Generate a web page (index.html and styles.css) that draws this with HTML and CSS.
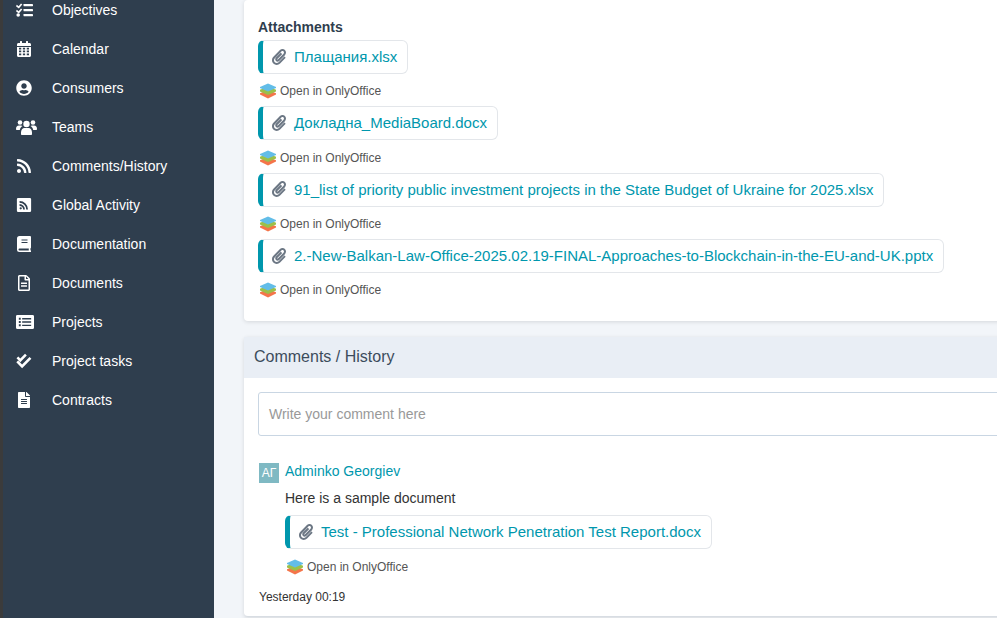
FILE: index.html
```html
<!DOCTYPE html>
<html lang="en">
<head>
  <meta charset="UTF-8" />
  <meta name="viewport" content="width=device-width, initial-scale=1.0" />
  <title>Comments / History</title>
  <link rel="stylesheet" href="styles.css">
</head>
<body>
  <svg class="defs" width="0" height="0" aria-hidden="true">
    <symbol id="clip" viewBox="0 0 448 512"><path d="M43.246 466.142c-58.43-60.289-57.341-157.511 1.386-217.581L254.392 34c44.316-45.332 116.351-45.336 160.671 0 43.89 44.894 43.943 117.329 0 162.276L232.214 383.128c-29.855 30.537-78.633 30.111-107.982-.998-28.275-29.97-27.368-77.473 1.452-106.953l143.743-146.835c6.182-6.314 16.312-6.422 22.626-.241l22.861 22.379c6.315 6.182 6.422 16.312.241 22.626L171.427 319.927c-4.932 5.045-5.236 13.428-.648 18.292 4.372 4.634 11.245 4.711 15.688.165l182.849-186.851c19.613-20.062 19.613-52.725-.011-72.798-19.189-19.627-49.957-19.637-69.154 0L90.39 293.295c-34.763 35.56-35.299 93.12-1.191 128.313 34.01 35.093 88.985 35.137 123.058.286l172.06-175.999c6.177-6.319 16.307-6.433 22.626-.256l22.877 22.364c6.319 6.177 6.434 16.307.256 22.626l-172.06 175.998c-59.576 60.938-155.943 60.216-214.77-.485z"/></symbol>
    <symbol id="office" viewBox="0 0 20 18">
      <path fill="#f4754a" d="M1 11.500 10 8l9 3.500v1.500L10 17.500 1 13z"/>
      <path fill="#9cc04a" d="M1 7.500 10 4l9 3.500V9.500L10 13.500 1 9.500z"/>
      <path fill="#62bde8" d="M1 4.500 10 .5l9 4v1L10 9.500 1 5.500z"/>
    </symbol>
  </svg>

  <div class="layout">
    <nav class="sidebar">
      <a class="nav-item" href="#">
        <svg class="nav-icon nav-icon-tasks" viewBox="0 0 17 14"><path d="M.8 1.800 2.600 3.300 5 .5 6.300 1.600 2.800 5.600 0 3.200zM.8 6.800 2.600 8.300 5 5.500l1.300 1.100-3.500 4L0 8.200z"/><circle cx="2.200" cy="12" r="1.800"/><rect x="7.500" y="1" width="9.500" height="2.200" rx=".4"/><rect x="7.500" y="6" width="9.500" height="2.200" rx=".4"/><rect x="7.500" y="11" width="9.500" height="2.200" rx=".4"/></svg>
        Objectives
      </a>
      <a class="nav-item" href="#">
        <svg class="nav-icon" viewBox="0 0 448 512"><path fill-rule="evenodd" d="M0 464c0 26.500 21.500 48 48 48h352c26.500 0 48-21.500 48-48V192H0zm64-248h72v56H64zm0 90h72v56H64zm0 90h72v56H64zm124-180h72v56h-72zm0 90h72v56h-72zm0 90h72v56h-72zm124-180h72v56h-72zm0 90h72v56h-72zm0 90h72v56h-72zM400 64h-48V16c0-8.800-7.200-16-16-16h-32c-8.800 0-16 7.200-16 16v48H160V16c0-8.800-7.200-16-16-16h-32c-8.800 0-16 7.200-16 16v48H48C21.500 64 0 85.500 0 112v48h448v-48c0-26.500-21.500-48-48-48z"/></svg>
        Calendar
      </a>
      <a class="nav-item" href="#">
        <svg class="nav-icon" viewBox="0 0 496 512"><path d="M248 8C111 8 0 119 0 256s111 248 248 248 248-111 248-248S385 8 248 8zm0 96c48.600 0 88 39.400 88 88s-39.400 88-88 88-88-39.400-88-88 39.400-88 88-88zm0 344c-58.700 0-111.300-26.600-146.500-68.200 18.800-35.400 55.600-59.800 98.500-59.800 2.400 0 4.800.4 7.100 1.100 13 4.200 26.600 6.900 40.900 6.900 14.300 0 28-2.700 40.900-6.900 2.300-.7 4.700-1.100 7.100-1.100 42.900 0 79.700 24.400 98.500 59.800C359.300 421.400 306.700 448 248 448z"/></svg>
        Consumers
      </a>
      <a class="nav-item" href="#">
        <svg class="nav-icon nav-icon-teams" viewBox="0 0 21 16"><circle cx="4" cy="3.500" r="2.300"/><circle cx="17" cy="3.500" r="2.300"/><circle cx="10.500" cy="5" r="3.200"/><path d="M0 10c0-2 1-3.500 3-3.500h2c.6 0 1.100.2 1.500.5C5 8 4 9.200 3.800 11H1c-.6 0-1-.4-1-1zM21 10c0-2-1-3.500-3-3.500h-2c-.6 0-1.100.2-1.500.5 1.500 1 2.500 2.200 2.700 4H20c.6 0 1-.4 1-1zM5 13.500c0-2.500 1.500-4.500 3.500-4.500h4c2 0 3.500 2 3.500 4.500V15c0 .6-.4 1-1 1H6c-.6 0-1-.4-1-1z"/></svg>
        Teams
      </a>
      <a class="nav-item" href="#">
        <svg class="nav-icon" viewBox="0 0 448 512"><path d="M128.081 415.959c0 35.369-28.672 64.041-64.041 64.041S0 451.328 0 415.959s28.672-64.041 64.041-64.041 64.040 28.673 64.040 64.041zm175.660 47.250c-8.354-154.600-132.185-278.587-286.950-286.950C7.656 175.765 0 183.105 0 192.253v48.069c0 8.415 6.490 15.472 14.887 16.018 111.832 7.284 201.473 96.702 208.772 208.772.547 8.397 7.604 14.887 16.018 14.887h48.069c9.149.001 16.489-7.655 15.995-16.790zm144.249.288C439.596 229.677 251.465 40.445 16.503 32.010 7.473 31.686 0 38.981 0 48.016v48.068c0 8.625 6.835 15.645 15.453 15.999 191.179 7.839 344.627 161.316 352.465 352.465.353 8.618 7.373 15.453 15.999 15.453h48.068c9.034-.001 16.329-7.474 16.005-16.504z"/></svg>
        Comments/History
      </a>
      <a class="nav-item" href="#">
        <svg class="nav-icon" viewBox="-1 -1 18 18"><path fill-rule="evenodd" d="M1.500 0h13A1.500 1.500 0 0 1 16 1.500v13a1.500 1.500 0 0 1-1.500 1.500h-13A1.500 1.500 0 0 1 0 14.500v-13A1.500 1.500 0 0 1 1.500 0zM3 3.500v2A7.500 7.500 0 0 1 10.500 13h2A9.500 9.500 0 0 0 3 3.500zm0 3.500v2A4 4 0 0 1 7 13h2A6 6 0 0 0 3 7zM4.300 10.400a1.300 1.300 0 1 0 0 2.600 1.300 1.300 0 0 0 0-2.600z"/></svg>
        Global Activity
      </a>
      <a class="nav-item" href="#">
        <svg class="nav-icon" viewBox="0 0 14 16"><path fill-rule="evenodd" d="M2.500 0H13a1 1 0 0 1 1 1v10.500a1 1 0 0 1-.5.800c-.1.500-.1 1.400 0 1.900.3.200.5.500.5.800v.5a.5.500 0 0 1-.5.500H2.500A2.500 2.500 0 0 1 0 13.500v-11A2.500 2.500 0 0 1 2.500 0zM4.500 3.500v1h6v-1zm0 2.500v1h6V6zM2.500 12.500a1 1 0 0 0 0 2h9.300a9 9 0 0 1 0-2z"/></svg>
        Documentation
      </a>
      <a class="nav-item" href="#">
        <svg class="nav-icon" viewBox="0 0 384 512"><path d="M369.900 97.900 286 14C277 5 264.800-.1 252.100-.1H48C21.500 0 0 21.500 0 48v416c0 26.500 21.500 48 48 48h288c26.500 0 48-21.500 48-48V131.900c0-12.700-5.100-25-14.100-34zM332.100 128H256V51.900zM48 464V48h160v104c0 13.300 10.700 24 24 24h104v288zm240-212v24c0 6.600-5.400 12-12 12H108c-6.600 0-12-5.400-12-12v-24c0-6.600 5.400-12 12-12h168c6.600 0 12 5.400 12 12zm0 88v24c0 6.600-5.400 12-12 12H108c-6.600 0-12-5.400-12-12v-24c0-6.600 5.400-12 12-12h168c6.600 0 12 5.400 12 12z"/></svg>
        Documents
      </a>
      <a class="nav-item" href="#">
        <svg class="nav-icon nav-icon-wide" viewBox="0 0 19 15"><path fill-rule="evenodd" d="M1.500 0h16A1.500 1.500 0 0 1 19 1.500v12a1.500 1.500 0 0 1-1.500 1.500h-16A1.500 1.500 0 0 1 0 13.500v-12A1.500 1.500 0 0 1 1.500 0zM3 3v2h2V3zm0 3.500v2h2v-2zM3 10v2h2v-2zM6.500 3.300v1.500h9.500V3.300zm0 3.500v1.500h9.500V6.800zm0 3.500v1.500h9.500v-1.500z"/></svg>
        Projects
      </a>
      <a class="nav-item" href="#">
        <svg class="nav-icon" viewBox="0 0 16 16"><path d="M.5 5.300 2.300 3.500 4.300 5.500 9 .7l1.800 1.800-6.500 6.700zM.3 9.300l1.800-1.800 4 3.900L13.500 4 15.400 5.800 6.100 15.200z"/></svg>
        Project tasks
      </a>
      <a class="nav-item" href="#">
        <svg class="nav-icon" viewBox="0 0 384 512"><path d="M224 136V0H24C10.700 0 0 10.700 0 24v464c0 13.300 10.700 24 24 24h336c13.300 0 24-10.700 24-24V160H248c-13.200 0-24-10.800-24-24zm64 236c0 6.600-5.400 12-12 12H108c-6.600 0-12-5.400-12-12v-8c0-6.600 5.400-12 12-12h168c6.600 0 12 5.400 12 12zm0-64c0 6.600-5.400 12-12 12H108c-6.600 0-12-5.400-12-12v-8c0-6.600 5.400-12 12-12h168c6.600 0 12 5.400 12 12zm0-72v8c0 6.600-5.400 12-12 12H108c-6.600 0-12-5.400-12-12v-8c0-6.600 5.400-12 12-12h168c6.600 0 12 5.400 12 12zm96-114.100v6.100H256V0h6.100c6.400 0 12.500 2.500 17 7l97.900 98c4.500 4.500 7 10.600 7 16.900z"/></svg>
        Contracts
      </a>
    </nav>

    <main class="content">
      <section class="card card-attachments">
        <h3 class="attach-title">Attachments</h3>

        <div class="attachment">
          <a class="file-pill" href="#"><svg class="clip-icon"><use href="#clip"/></svg>Плащания.xlsx</a>
          <a class="open-office" href="#"><svg class="office-icon"><use href="#office"/></svg>Open in OnlyOffice</a>
        </div>
        <div class="attachment">
          <a class="file-pill" href="#"><svg class="clip-icon"><use href="#clip"/></svg>Докладна_MediaBoard.docx</a>
          <a class="open-office" href="#"><svg class="office-icon"><use href="#office"/></svg>Open in OnlyOffice</a>
        </div>
        <div class="attachment">
          <a class="file-pill" href="#"><svg class="clip-icon"><use href="#clip"/></svg>91_list of priority public investment projects in the State Budget of Ukraine for 2025.xlsx</a>
          <a class="open-office" href="#"><svg class="office-icon"><use href="#office"/></svg>Open in OnlyOffice</a>
        </div>
        <div class="attachment">
          <a class="file-pill" href="#"><svg class="clip-icon"><use href="#clip"/></svg>2.-New-Balkan-Law-Office-2025.02.19-FINAL-Approaches-to-Blockchain-in-the-EU-and-UK.pptx</a>
          <a class="open-office" href="#"><svg class="office-icon"><use href="#office"/></svg>Open in OnlyOffice</a>
        </div>
      </section>

      <section class="card card-comments">
        <h2 class="card-header">Comments / History</h2>
        <div class="card-body">
          <div class="comment-input">Write your comment here</div>
          <div class="comment">
            <div class="comment-head">
              <span class="avatar">АГ</span>
              <a class="comment-author" href="#">Adminko Georgiev</a>
            </div>
            <div class="comment-body">
              <p class="comment-text">Here is a sample document</p>
              <a class="file-pill" href="#"><svg class="clip-icon"><use href="#clip"/></svg>Test - Professional Network Penetration Test Report.docx</a>
              <a class="open-office" href="#"><svg class="office-icon"><use href="#office"/></svg>Open in OnlyOffice</a>
            </div>
            <div class="comment-time">Yesterday 00:19</div>
          </div>
        </div>
      </section>
    </main>
  </div>
</body>
</html>
```

FILE: styles.css
```css
:root {
  --bg-color: #f2f5f9;
  --sidebar-bg: #2f3e4e;
  --teal: #0097ad;
  --text-color: #2f3e4e;
  --line: #e3e6ea;
}
* {
  box-sizing: border-box;
  margin: 0;
  padding: 0;
}
html, body {
  height: 618px;
  overflow: hidden;
}
body {
  font-family: 'Liberation Sans', Arial, sans-serif;
  background: var(--bg-color);
  color: var(--text-color);
}
a {
  text-decoration: none;
}
.defs {
  display: block;
}
.layout {
  display: flex;
  height: 618px;
}
.sidebar {
  flex: none;
  width: 214px;
  height: 618px;
  background: var(--sidebar-bg);
  border-left: 3px solid #3b3b3b;
  overflow: hidden;
}
.nav-item {
  display: flex;
  align-items: center;
  height: 39px;
  padding-left: 13px;
  color: #fff;
  font-size: 14px;
}
.nav-item:first-child {
  margin-top: -10px;
}
.nav-icon {
  flex: none;
  width: 16px;
  height: 16px;
  margin-right: 20px;
  fill: #fff;
}
.nav-icon-wide {
  width: 18px;
  margin-right: 18px;
}
.nav-icon-tasks {
  width: 17px;
  height: 14px;
  margin-right: 19px;
}
.nav-icon-teams {
  width: 21px;
  margin-right: 15px;
}
.content {
  flex: 1;
  min-width: 0;
  padding-left: 30px;
  overflow: hidden;
}
.card {
  width: 900px;
  background: #fff;
  border-radius: 4px;
  box-shadow: 0 1px 4px rgba(0,0,0,0.12);
}
.card-attachments {
  height: 321px;
  padding: 19px 14px 0;
}
.attach-title {
  font-size: 14px;
  line-height: 16px;
  margin-bottom: 5.100px;
}
.attachment {
  display: flex;
  flex-direction: column;
  align-items: flex-start;
}
.file-pill {
  display: inline-flex;
  align-items: center;
  height: 34px;
  padding: 0 10px 1px 9px;
  border: 1px solid var(--line);
  border-left: 5px solid var(--teal);
  border-radius: 6px;
  background: #fff;
  color: var(--teal);
  font-size: 15px;
  white-space: nowrap;
}
.clip-icon {
  flex: none;
  width: 14px;
  height: 16px;
  margin-right: 8px;
  fill: #6c7784;
}
.open-office {
  display: flex;
  align-items: center;
  height: 32.400px;
  padding: 2px 0 0 1px;
  color: #555;
  font-size: 12px;
}
.office-icon {
  width: 18px;
  height: 16px;
  margin-right: 3px;
}
.card-comments {
  height: 280px;
  margin-top: 16px;
  border-bottom: 1px solid #d8dde3;
}
.card-header {
  height: 41px;
  padding: 0 10px;
  background: #e9eef5;
  font-size: 16px;
  font-weight: 400;
  line-height: 39px;
  color: #3c4c5c;
}
.card-body {
  padding: 14px 14px 0;
}
.comment-input {
  height: 44px;
  padding: 0 10px;
  border: 1px solid #c9d6e3;
  border-radius: 3px;
  color: #999;
  font-size: 14px;
  line-height: 42px;
}
.comment {
  margin-top: 27px;
}
.comment-head {
  display: flex;
  align-items: center;
  gap: 6px;
  padding-left: 1px;
}
.avatar {
  width: 20px;
  height: 20px;
  background: #7fb9c3;
  color: #fff;
  font-size: 12px;
  line-height: 20px;
  text-align: center;
}
.comment-author {
  color: var(--teal);
  font-size: 14px;
  position: relative;
  top: -2px;
}
.comment-body {
  padding-left: 27px;
}
.comment-text {
  margin-top: 6px;
  margin-bottom: 8px;
  font-size: 14px;
  line-height: 18px;
  color: #333;
}
.comment-body .open-office {
  height: 34px;
}
.comment-time {
  margin-top: 6px;
  padding-left: 1px;
  color: #333;
  font-size: 12px;
  line-height: 16px;
}
```
